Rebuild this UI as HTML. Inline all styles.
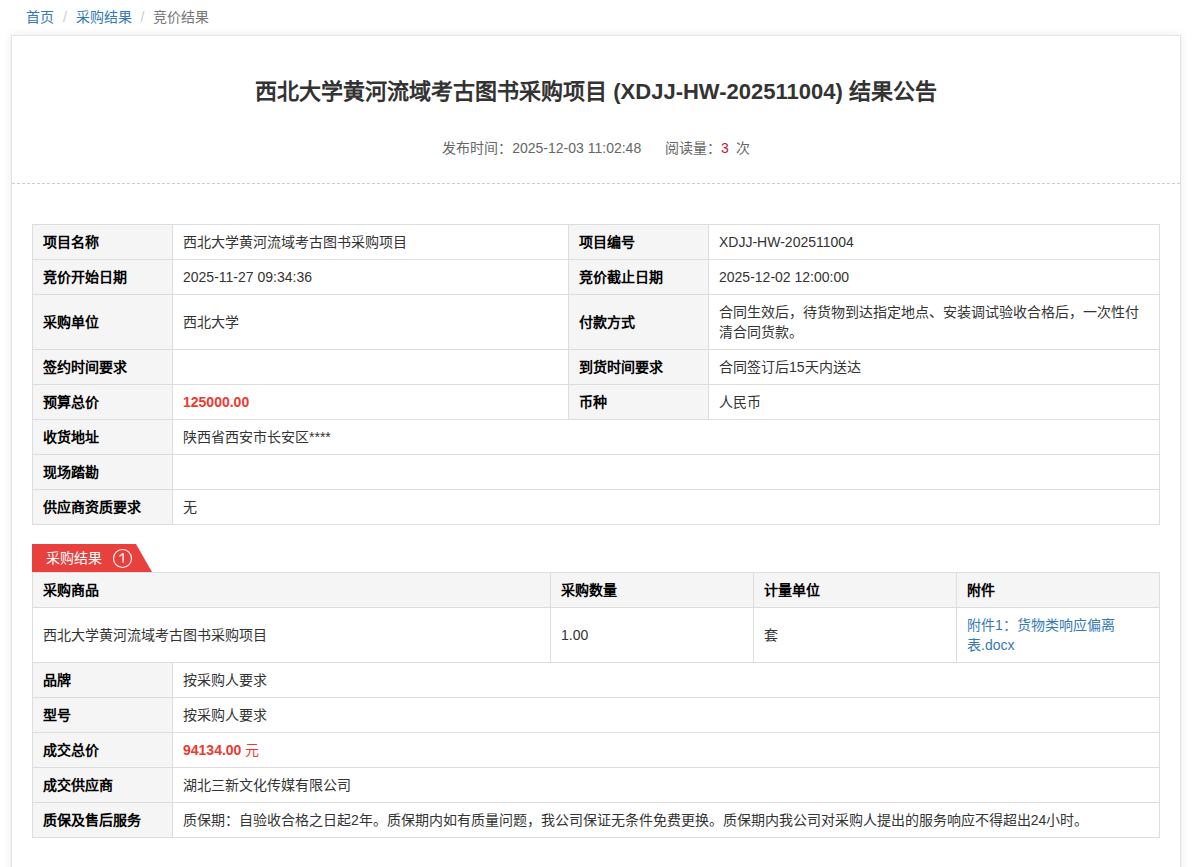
<!DOCTYPE html>
<html lang="zh-CN">
<head>
<meta charset="utf-8">
<style>
*{box-sizing:border-box;}
html,body{margin:0;padding:0;background:#fff;}
body{font-family:"Liberation Sans",sans-serif;font-size:14px;line-height:20px;color:#333;width:1197px;height:867px;overflow:hidden;position:relative;}
.bc{position:absolute;left:11px;top:7px;padding:0 15px;white-space:nowrap;}
.bc li{display:inline-block;list-style:none;}
.bc ul{margin:0;padding:0;}
.bc a{color:#337ab7;text-decoration:none;}
.bc li+li:before{content:"/\00a0";padding:0 5px;color:#ccc;}
.bc .act{color:#777;}
.panel{position:absolute;left:11px;top:35px;width:1170px;height:900px;border:1px solid #e3e3e3;box-shadow:0 0 8px rgba(0,0,0,.09);background:#fff;}
.hd{position:absolute;left:0;top:0;width:1168px;height:148px;border-bottom:1px dashed #ccc;}
.title{position:absolute;left:0;width:100%;top:41px;text-align:center;font-size:22px;line-height:30px;font-weight:bold;color:#333;}
.meta{position:absolute;left:0;width:100%;top:102px;text-align:center;color:#666;}
.meta .n{color:#c9151e;}
table{border-collapse:collapse;table-layout:fixed;position:absolute;left:20px;width:1127px;}
td{border:1px solid #ddd;padding:7px 10px;vertical-align:middle;word-wrap:break-word;}
td.l{background:#f5f5f5;font-weight:bold;color:#000;}
.red{color:#ec3a2f;font-weight:bold;}
.tab{position:absolute;left:20px;top:508px;width:121px;height:28px;}
.tab svg{position:absolute;left:0;top:0;}
.tab .t{position:absolute;left:14px;top:4px;color:#fff;}
.tab .c{position:absolute;left:81px;top:4px;width:19px;height:19px;border:1px solid #fff;border-radius:50%;color:#fff;text-align:center;line-height:17px;font-size:14px;}
a.lk{color:#337ab7;text-decoration:none;}
</style>
</head>
<body>
<div class="bc"><ul><li><a href="#">首页</a></li> <li><a href="#">采购结果</a></li> <li class="act">竞价结果</li></ul></div>
<div class="panel">
  <div class="hd">
    <div class="title">西北大学黄河流域考古图书采购项目 (XDJJ-HW-202511004) 结果公告</div>
    <div class="meta"><span style="margin-right:20px">发布时间：2025-12-03 11:02:48</span> <span>阅读量：<span class="n" style="margin-right:3px">3</span> 次</span></div>
  </div>

  <table style="top:188px">
    <colgroup><col style="width:140px"><col style="width:396px"><col style="width:140px"><col style="width:451px"></colgroup>
    <tr style="height:35px"><td class="l">项目名称</td><td>西北大学黄河流域考古图书采购项目</td><td class="l">项目编号</td><td>XDJJ-HW-202511004</td></tr>
    <tr style="height:35px"><td class="l">竞价开始日期</td><td>2025-11-27 09:34:36</td><td class="l">竞价截止日期</td><td>2025-12-02 12:00:00</td></tr>
    <tr style="height:55px"><td class="l">采购单位</td><td>西北大学</td><td class="l">付款方式</td><td>合同生效后，待货物到达指定地点、安装调试验收合格后，一次性付清合同货款。</td></tr>
    <tr style="height:35px"><td class="l">签约时间要求</td><td></td><td class="l">到货时间要求</td><td>合同签订后15天内送达</td></tr>
    <tr style="height:35px"><td class="l">预算总价</td><td><span class="red">125000.00</span></td><td class="l">币种</td><td>人民币</td></tr>
    <tr style="height:35px"><td class="l">收货地址</td><td colspan="3">陕西省西安市长安区****</td></tr>
    <tr style="height:35px"><td class="l">现场踏勘</td><td colspan="3"></td></tr>
    <tr style="height:35px"><td class="l">供应商资质要求</td><td colspan="3">无</td></tr>
  </table>

  <div class="tab">
    <svg width="121" height="28" viewBox="0 0 121 28"><polygon points="0,0 104,0 120,28 0,28" fill="#e8403d"/></svg>
    <span class="t">采购结果</span>
    <svg class="c1" width="40" height="28" style="position:absolute;left:71px;top:0" viewBox="71 0 40 28"><circle cx="90.5" cy="14.5" r="9" fill="none" stroke="#fff" stroke-width="1.1"/><path d="M91.1 9.3V18.8" stroke="#fff" stroke-width="1.4" fill="none"/><path d="M91.0 9.6L87.4 12.2" stroke="#fff" stroke-width="1.2" fill="none"/></svg>
  </div>

  <table style="top:536px">
    <colgroup><col style="width:518px"><col style="width:203px"><col style="width:203px"><col style="width:203px"></colgroup>
    <tr style="height:35px"><td class="l">采购商品</td><td class="l">采购数量</td><td class="l">计量单位</td><td class="l">附件</td></tr>
    <tr style="height:55px"><td>西北大学黄河流域考古图书采购项目</td><td>1.00</td><td>套</td><td><a class="lk" href="#">附件1：货物类响应偏离表.docx</a></td></tr>
  </table>
  <table style="top:626px">
    <colgroup><col style="width:140px"><col style="width:987px"></colgroup>
    <tr style="height:35px"><td class="l">品牌</td><td>按采购人要求</td></tr>
    <tr style="height:35px"><td class="l">型号</td><td>按采购人要求</td></tr>
    <tr style="height:35px"><td class="l">成交总价</td><td><span class="red">94134.00</span><span style="color:#ec3a2f"> 元</span></td></tr>
    <tr style="height:35px"><td class="l">成交供应商</td><td>湖北三新文化传媒有限公司</td></tr>
    <tr style="height:35px"><td class="l">质保及售后服务</td><td>质保期：自验收合格之日起2年。质保期内如有质量问题，我公司保证无条件免费更换。质保期内我公司对采购人提出的服务响应不得超出24小时。</td></tr>
  </table>
</div>
</body>
</html>
